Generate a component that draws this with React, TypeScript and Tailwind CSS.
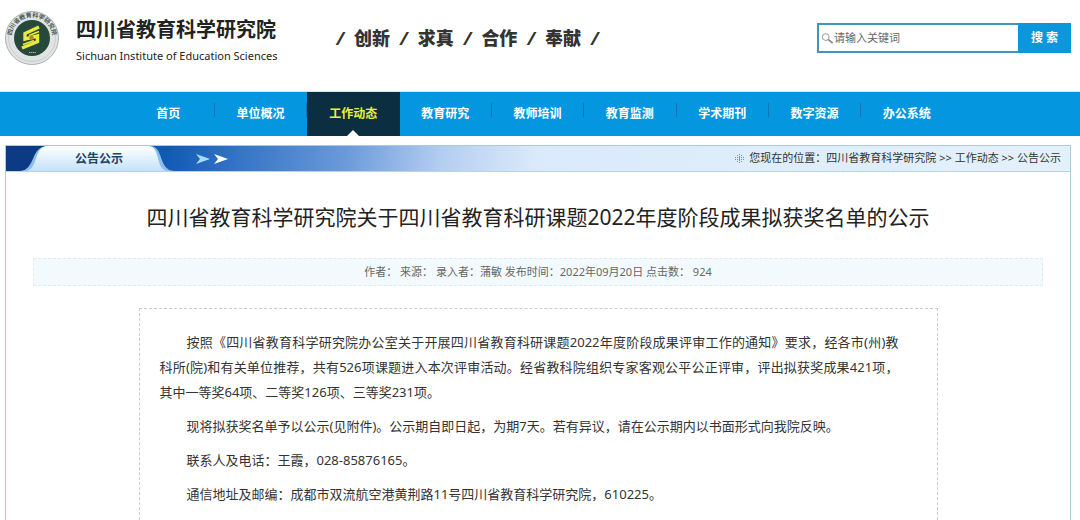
import { Fragment } from "react";

const MOTTO = ["创新", "求真", "合作", "奉献"];

const NAV_ITEMS = [
  "首页",
  "单位概况",
  "工作动态",
  "教育研究",
  "教师培训",
  "教育监测",
  "学术期刊",
  "数字资源",
  "办公系统",
];

const ACTIVE_ITEM = "工作动态";

const PARAGRAPHS = [
  "按照《四川省教育科学研究院办公室关于开展四川省教育科研课题2022年度阶段成果评审工作的通知》要求，经各市(州)教科所(院)和有关单位推荐，共有526项课题进入本次评审活动。经省教科院组织专家客观公平公正评审，评出拟获奖成果421项，其中一等奖64项、二等奖126项、三等奖231项。",
  "现将拟获奖名单予以公示(见附件)。公示期自即日起，为期7天。若有异议，请在公示期内以书面形式向我院反映。",
  "联系人及电话：王霞，028-85876165。",
  "通信地址及邮编：成都市双流航空港黄荆路11号四川省教育科学研究院，610225。",
];

export default function App() {
  return (
    <div className="flex min-h-screen flex-col bg-white font-['Noto_Sans','Noto_Sans_CJK_SC',sans-serif] text-[#333]">
      <Header />
      <NavBar />
      <main className="mt-[9px] mr-[9px] ml-[5px] flex flex-1 flex-col border border-b-0 border-[#a9cbdc]">
        <SectionBar />
        <Article />
      </main>
    </div>
  );
}

function Header() {
  return (
    <header className="flex h-[91px] items-start pr-[9px] pl-[5px]">
      <Emblem />
      <div className="mt-[17px] ml-[17px] whitespace-nowrap text-[#222]">
        <p className="text-[20px] leading-[26px] font-bold">
          四川省教育科学研究院
        </p>
        <p className="text-[11px] leading-[26px]">
          Sichuan Institute of Education Sciences
        </p>
      </div>
      <Motto />
      <SearchBox />
    </header>
  );
}

function Motto() {
  return (
    <p className="mt-[26px] ml-[59px] flex gap-[10px] text-[18px] leading-[24px] font-black whitespace-nowrap text-[#333]">
      <span className="font-bold italic">/</span>
      {MOTTO.map((word) => (
        <Fragment key={word}>
          <span>{word}</span>
          <span className="font-bold italic">/</span>
        </Fragment>
      ))}
    </p>
  );
}

function SearchBox() {
  return (
    <form
      className="mt-[23px] ml-auto flex h-[30px] w-[254px]"
      onSubmit={(e) => e.preventDefault()}
    >
      <label className="flex min-w-0 flex-1 items-center border-2 border-r-0 border-[#3c97bb] pl-[2px]">
        <svg viewBox="0 0 14 14" className="size-[13px] shrink-0" fill="none">
          <circle cx="5" cy="5.5" r="3.6" stroke="#aaa" strokeWidth="1.2" />
          <path d="M8 8.2 12.6 12" stroke="#8d8478" strokeWidth="1.8" />
        </svg>
        <input
          type="text"
          aria-label="搜索关键词"
          placeholder="请输入关键词"
          className="w-full min-w-0 text-[11px] outline-none placeholder:text-[#666]"
        />
      </label>
      <button
        type="submit"
        className="w-[53px] bg-[#0c96dc] text-[12px] font-bold text-white"
      >
        搜 索
      </button>
    </form>
  );
}

function NavBar() {
  return (
    <nav className="flex h-[45px] justify-center border-t border-[#c4ecfa] bg-[#0497e0] pr-1">
      <ul className="grid w-full max-w-[831px] grid-cols-9">
        {NAV_ITEMS.map((item) => (
          <NavItem key={item} label={item} active={item === ACTIVE_ITEM} />
        ))}
      </ul>
    </nav>
  );
}

function NavItem({ label, active }: { label: string; active: boolean }) {
  return (
    <li
      className={`group relative flex items-center ${active ? "bg-[#0b2e40]" : ""}`}
    >
      <a
        href="#"
        className={`flex-1 text-center text-[12px] font-bold ${
          active ? "text-[#e6f23c]" : "text-white"
        }`}
      >
        {label}
      </a>
      {!active && (
        <span className="mb-2 h-[14px] w-px bg-[#0a76b4] group-last:bg-transparent" />
      )}
      {active && (
        <svg
          viewBox="0 0 12 6"
          className="absolute bottom-0 left-1/2 h-[6px] w-[12px] -translate-x-1/2"
        >
          <path d="M0 6 6 0l6 6Z" fill="#fff" />
        </svg>
      )}
    </li>
  );
}

function SectionBar() {
  return (
    <div className="flex h-[26px] items-center border-b border-[#b9d3e2] bg-[linear-gradient(100deg,#1059b4_15%,#3574c6_22%,#6b9ada_32%,#b4cef1_41%,#dbeafa_50%,#e3f1fd_100%)]">
      <div className="relative flex h-full w-[168px] items-center justify-center">
        <svg
          viewBox="0 0 168 25"
          preserveAspectRatio="none"
          className="absolute inset-0 size-full"
        >
          <defs>
            <linearGradient id="tab" x1="0" y1="0" x2="0" y2="1">
              <stop offset="0" stopColor="#ffffff" />
              <stop offset="1" stopColor="#c3e2fb" />
            </linearGradient>
          </defs>
          <path d="M0 0H60V25H0Z" fill="#0c3a85" />
          <path
            d="M14 25C30 24 24 0 42 0H144C158 0 152 24 168 25Z"
            fill="#8dbdec"
          />
          <path
            d="M20 25C33 23 27 0 42 0H142C155 0 149 23 161 25Z"
            fill="url(#tab)"
          />
        </svg>
        <h2 className="relative pl-[18px] text-[12px] font-bold text-[#1d4668]">
          公告公示
        </h2>
      </div>
      <svg viewBox="0 0 32 12" className="ml-[22px] h-[12px] w-[32px]">
        <path d="M0 1 14 6 0 11 4 6Z" fill="#a5dcfa" />
        <path d="M18 1 32 6 18 11 22 6Z" fill="#fff" />
      </svg>
      <Breadcrumb />
    </div>
  );
}

function Breadcrumb() {
  return (
    <div className="ml-auto flex items-center gap-[5px] pr-[9px] text-[11px] whitespace-nowrap text-[#333]">
      <svg viewBox="0 0 9 9" className="size-[9px]" stroke="#7d8f9c">
        <path d="M2.5 1V8M4.500 0V9M6.500 1V8M0 3.500H9M0 5.500H9" strokeDasharray="1 1" />
      </svg>
      <p>
        您现在的位置：<a href="#">四川省教育科学研究院</a> &gt;&gt;{" "}
        <a href="#">工作动态</a> &gt;&gt; <a href="#">公告公示</a>
      </p>
    </div>
  );
}

function Article() {
  return (
    <article className="flex flex-1 flex-col px-[27px] pt-[27px]">
      <h1 className="text-center text-[21px] leading-[36px] text-[#222]">
        四川省教育科学研究院关于四川省教育科研课题2022年度阶段成果拟获奖名单的公示
      </h1>
      <p className="mt-[23px] border border-dashed border-[#e2ebf0] bg-[#f3fafe] text-center text-[11px] leading-[26px] text-[#666]">
        作者： 来源： 录入者：蒲敏 发布时间：2022年09月20日 点击数： 924
      </p>
      <div className="mx-auto mt-[22px] w-full max-w-[799px] flex-1 border border-b-0 border-dashed border-[#ccc] pt-[21px] pr-[38px] pl-[20px] text-[13px] leading-[25px]">
        {PARAGRAPHS.map((text) => (
          <p key={text} className="mb-[9px] text-justify indent-[27px] last:mb-0">
            {text}
          </p>
        ))}
      </div>
    </article>
  );
}

function Emblem() {
  return (
    <svg viewBox="0 0 54 54" className="mt-[11px] size-[54px] shrink-0">
      <defs>
        <path id="ring" d="M7.5 33A20.5 20.5 0 1 1 46.5 33" />
      </defs>
      <circle cx="27" cy="27" r="26.5" fill="#dfe3e3" stroke="#aab0b0" />
      <circle cx="27" cy="27" r="23.5" fill="none" stroke="#c8cdcd" />
      <circle cx="27" cy="27" r="18" fill="#26493c" />
      <text fontSize="6" fontWeight="700" fill="#4c5552">
        <textPath href="#ring" startOffset="50%" textAnchor="middle">
          四川省教育科学研究院
        </textPath>
      </text>
      <g fill="none" stroke="#e9ea3f">
        <path d="M34 16 20 22.500V28L32.500 25V30.500L17 37" strokeWidth="3.4" />
        <path d="M34 20.500 24 24.500M29 29.500 18 33.500" strokeWidth="1.4" />
      </g>
      <circle cx="26.5" cy="26.500" r="2.2" fill="#b8862c" />
      <path d="M24 41.500H31" stroke="#a9b7a4" strokeDasharray="1.500 .5" />
    </svg>
  );
}
